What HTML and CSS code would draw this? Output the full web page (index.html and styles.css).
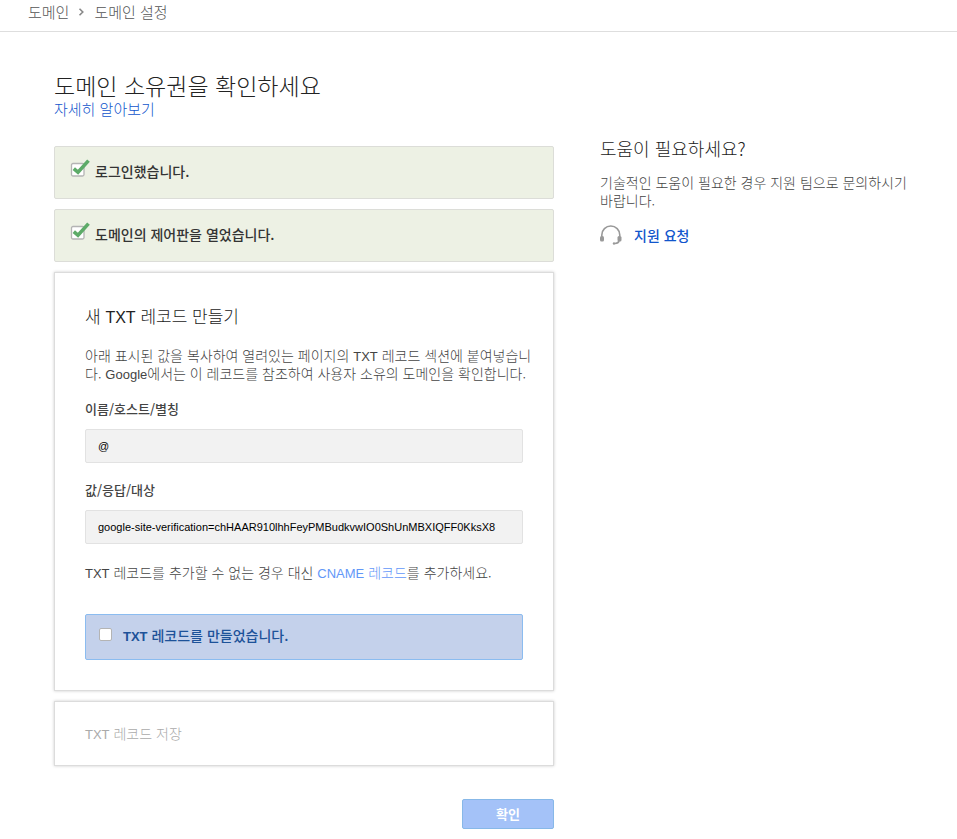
FILE: index.html
```html
<!DOCTYPE html>
<html lang="ko">
<head>
<meta charset="utf-8">
<meta name="viewport" content="width=device-width, initial-scale=1">
<title>도메인 설정</title>
<link rel="stylesheet" href="styles.css">
</head>
<body>
<header class="topbar">
  <nav class="breadcrumb">
    <a href="#domains">도메인</a>
    <svg class="chevron" viewBox="0 0 6 8" aria-hidden="true"><path d="M1 .7 4.3 4 1 7.3"/></svg>
    <a href="#setup">도메인 설정</a>
  </nav>
</header>
<div class="page">
  <main class="main">
    <h1>도메인 소유권을 확인하세요</h1>
    <a class="learn" href="#learn">자세히 알아보기</a>

    <ol class="steps">
      <li class="done">
        <svg class="tick" viewBox="0 0 20 20" aria-hidden="true"><rect class="tick-box" x="1.500" y="5.500" width="12.500" height="12.500" rx="1.5"/><path class="tick-mark" d="M3.800 10.600 8 14.300 18.500 2.600"/></svg>
        <span>로그인했습니다.</span>
      </li>
      <li class="done">
        <svg class="tick" viewBox="0 0 20 20" aria-hidden="true"><rect class="tick-box" x="1.500" y="5.500" width="12.500" height="12.500" rx="1.5"/><path class="tick-mark" d="M3.800 10.600 8 14.300 18.500 2.600"/></svg>
        <span>도메인의 제어판을 열었습니다.</span>
      </li>
      <li class="card current">
        <h2>새 <span class="latin">TXT</span> 레코드 만들기</h2>
        <p class="intro">아래 표시된 값을 복사하여 열려있는 페이지의 <span class="latin">TXT</span> 레코드 섹션에 붙여넣습니<br>다. <span class="latin">Google</span>에서는 이 레코드를 참조하여 사용자 소유의 도메인을 확인합니다.</p>
        <label class="field-label" for="host">이름/호스트/별칭</label>
        <input class="field" id="host" type="text" value="@" readonly>
        <label class="field-label" for="value">값/응답/대상</label>
        <input class="field" id="value" type="text" value="google-site-verification=chHAAR910lhhFeyPMBudkvwIO0ShUnMBXIQFF0KksX8" readonly>
        <p class="alternative"><span class="latin">TXT</span> 레코드를 추가할 수 없는 경우 대신 <a href="#cname"><span class="latin">CNAME</span> 레코드</a>를 추가하세요.</p>
        <label class="confirm"><input type="checkbox"><span><span class="latin">TXT</span> 레코드를 만들었습니다.</span></label>
      </li>
      <li class="card pending"><span class="latin">TXT</span> 레코드 저장</li>
    </ol>
    <button class="submit" type="button">확인</button>
  </main>

  <aside class="help">
    <h2>도움이 필요하세요?</h2>
    <p>기술적인 도움이 필요한 경우 지원 팀으로 문의하시기<br>바랍니다.</p>
    <a class="support" href="#support">
      <svg class="headset" viewBox="0 0 22 20" aria-hidden="true"><path class="band" d="M1.800 11.500V10a9 9 0 0 1 18 0v1.500"/><rect x="0" y="11" width="4" height="5.500" rx="1.500"/><rect x="17.500" y="11" width="4" height="5.500" rx="1.500"/><path class="mic" d="M19 16c-.4 1.600-2 2.300-4 2.500"/><circle cx="14" cy="18.500" r="1.200"/></svg>
      <span>지원 요청</span>
    </a>
  </aside>
</div>
</body>
</html>
```
FILE: styles.css
```css
* {
  box-sizing: border-box;
}

body {
  margin: 0;
  background: #fff;
  color: #444;
  font: 300 14px/18px "Noto Sans CJK KR", sans-serif;
}

h1,
h2,
p,
ol {
  margin: 0;
  padding: 0;
}

a {
  color: #15c;
  text-decoration: none;
}

.latin {
  font-family: "Liberation Sans", sans-serif;
  font-size: 13px;
  line-height: 1;
}

.topbar {
  height: 32px;
  padding: 1px 28px;
  border-bottom: 1px solid #dedede;
}

.breadcrumb {
  display: flex;
  align-items: center;
  gap: 9px;
  font-size: 15px;
  line-height: 22px;
}

.breadcrumb a {
  color: #555;
}

.chevron {
  width: 7px;
  height: 8px;
  fill: none;
  stroke: #888;
  stroke-width: 1.6;
}

.page {
  display: flex;
  gap: 46px;
  padding: 39px 54px 10px;
}

.main {
  display: flex;
  flex: 0 1 500px;
  flex-direction: column;
  min-width: 0;
}

h1 {
  color: #222;
  font-size: 23px;
  font-weight: 300;
  line-height: 28px;
}

.learn {
  font-size: 15px;
  line-height: 20px;
}

.steps {
  display: grid;
  grid-template-columns: minmax(0, 1fr);
  gap: 10px;
  margin-top: 27px;
  list-style: none;
}

.done {
  display: flex;
  gap: 5px;
  min-height: 53px;
  padding: 11px 15px;
  border: 1px solid #dcddd8;
  border-radius: 2px;
  background: #edf1e4;
  color: #333;
  font-weight: 500;
  line-height: 26px;
}

.tick {
  width: 20px;
  height: 20px;
}

.tick-box {
  fill: #fff;
  stroke: #b4b4b4;
  stroke-width: 1.3;
}

.tick-mark {
  fill: none;
  stroke: #5dab68;
  stroke-width: 3.6;
}

.card {
  border: 1px solid #dcdcdc;
  box-shadow: 0 0 3px #ccc;
}

.current {
  padding: 30px;
}

.current h2,
.help h2 {
  color: #222;
  font-size: 17px;
  font-weight: 300;
  line-height: 26px;
}

.current h2 .latin {
  font-size: 16px;
}

.intro {
  margin-top: 17px;
  white-space: nowrap;
}

.field-label {
  display: block;
  margin-top: 18px;
  font-size: 13px;
  font-weight: 500;
}

.field {
  display: block;
  width: 100%;
  height: 34px;
  margin-top: 11px;
  padding: 0 12px;
  border: 1px solid #e2e2e2;
  border-radius: 2px;
  background: #f2f2f2;
  color: #000;
  font: 11px "Liberation Sans", sans-serif;
}

.alternative {
  margin-top: 19px;
}

.alternative a {
  color: #6297f8;
}

.confirm {
  display: flex;
  align-items: flex-start;
  gap: 11px;
  height: 46px;
  margin-top: 33px;
  padding: 11px 13px;
  border: 1px solid #8bbcf0;
  border-radius: 2px;
  background: #c4d1eb;
  color: #1d5299;
  font-weight: 500;
}

.confirm .latin {
  font-weight: 700;
}

.confirm input {
  width: 13px;
  height: 13px;
  margin: 2px 0 0;
  border: 1px solid #b4b4b4;
  border-radius: 2px;
  background: #fff;
  appearance: none;
}

.confirm input:checked {
  background: #1d5299;
}

.pending {
  min-height: 65px;
  padding: 22px 30px;
  color: #aaa;
}

.submit {
  align-self: flex-end;
  width: 92px;
  height: 30px;
  margin-top: 33px;
  padding: 0;
  border: 1px solid #87b8e8;
  border-radius: 2px;
  background: #a4c2f8;
  color: #fff;
  font: 700 13px/26px "Noto Sans CJK KR", sans-serif;
}

.help {
  flex: 1;
  min-width: 0;
  padding-top: 64px;
}

.help h2 {
  font-size: 18px;
}

.help p {
  margin-top: 12px;
  white-space: nowrap;
}

.support {
  display: flex;
  align-items: center;
  gap: 12px;
  margin-top: 16px;
  font-weight: 500;
}

.headset {
  width: 22px;
  height: 20px;
  fill: #999;
}

.band,
.mic {
  fill: none;
  stroke: #999;
  stroke-width: 1.6;
}
```
